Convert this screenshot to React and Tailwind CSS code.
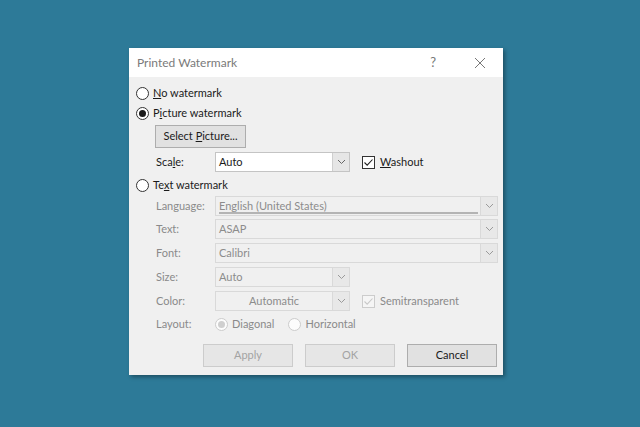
import React from "react";

const FONT = { fontFamily: 'Lato, "Noto Sans", sans-serif' };

function Radio({ checked, disabled }) {
  return (
    <span
      className={
        "flex h-[13px] w-[13px] shrink-0 items-center justify-center rounded-full border " +
        (disabled ? "border-[#cccccc] bg-[#fcfcfc]" : "border-[#333333] bg-white")
      }
    >
      {checked && (
        <span
          className={
            "h-[7px] w-[7px] rounded-full " + (disabled ? "bg-[#cfcfcf]" : "bg-[#1a1a1a]")
          }
        />
      )}
    </span>
  );
}

function Check({ checked, disabled }) {
  return (
    <span
      className={
        "flex h-[13px] w-[13px] shrink-0 items-center justify-center border " +
        (disabled ? "border-[#cccccc] bg-[#f5f5f5]" : "border-[#333333] bg-white")
      }
    >
      {checked && (
        <svg width="11" height="11" viewBox="0 0 11 11">
          <path
            d="M1.5 5.5 L4.2 8.2 L9.5 2.5"
            fill="none"
            stroke={disabled ? "#c8c8c8" : "#222"}
            strokeWidth="1.1"
          />
        </svg>
      )}
    </span>
  );
}

function Chevron({ disabled }) {
  return (
    <svg width="9" height="6" viewBox="0 0 9 6">
      <path
        d="M1 1 L4.5 4.5 L8 1"
        fill="none"
        stroke={disabled ? "#9a9a9a" : "#666"}
        strokeWidth="1"
      />
    </svg>
  );
}

function Select({ value, width, disabled, center, underline }) {
  return (
    <div
      className={
        "flex h-[20px] border " +
        (disabled ? "border-[#d9d9d9] bg-[#f0f0f0]" : "border-[#c4c4c4] bg-white")
      }
      style={{ width }}
    >
      <div
        className={
          "relative flex flex-1 items-center px-[3px] text-[11px] " +
          (center ? "justify-center " : "") +
          (disabled ? "text-[#8c8c8c]" : "text-[#1a1a1a]")
        }
      >
        {value}
        {underline && (
          <span className="absolute bottom-[1px] left-[3px] right-[2px] h-[2px] bg-[#b4b4b4]" />
        )}
      </div>
      <div
        className={
          "flex w-[17px] items-center justify-center border-l " +
          (disabled ? "border-[#d9d9d9] bg-[#e8e8e8]" : "border-[#cfcfcf] bg-[#e6e6e6]")
        }
      >
        <Chevron disabled={disabled} />
      </div>
    </div>
  );
}

function Row({ label, children, className = "" }) {
  return (
    <div className={"flex items-center pl-[27px] " + className}>
      <span className="w-[59px] text-[11px] text-[#8a8a8a]">{label}</span>
      {children}
    </div>
  );
}

function Button({ children, disabled }) {
  return (
    <div
      className={
        "flex h-[23px] w-[90px] items-center justify-center border text-[11px] " +
        (disabled
          ? "border-[#cccccc] bg-[#e6e6e6] text-[#a3a3a3]"
          : "border-[#adadad] bg-[#e1e1e1] text-[#1a1a1a]")
      }
    >
      {children}
    </div>
  );
}

export default function App() {
  return (
    <div className="h-[427px] w-[640px] overflow-hidden bg-[#2d7a98] pl-[129px] pt-[48px]" style={FONT}>
      <div className="flex h-[327px] w-[374px] flex-col bg-[#f0f0f0] shadow-[2px_2px_4px_rgba(0,0,0,0.35)]">
        {/* title bar */}
        <div className="flex h-[29px] items-center bg-white pl-[8px]">
          <span className="text-[12px] text-[#7a7a7a]">Printed Watermark</span>
          <span className="ml-auto mr-[38px] text-[13px] text-[#777]">?</span>
          <svg width="12" height="12" viewBox="0 0 12 12" className="mr-[17px]">
            <path d="M1 1 L11 11 M11 1 L1 11" stroke="#777" strokeWidth="1" />
          </svg>
        </div>

        <div className="flex flex-col pl-[7px]">
          <div className="mt-[6px] flex h-[20px] items-center gap-[4px] text-[11px] text-[#1a1a1a]">
            <Radio />
            <span>
              <span className="underline">N</span>o watermark
            </span>
          </div>
          <div className="flex h-[20px] items-center gap-[4px] text-[11px] text-[#1a1a1a]">
            <Radio checked />
            <span>
              P<span className="underline">i</span>cture watermark
            </span>
          </div>
          <div className="ml-[19px] mt-[2px] flex h-[23px] w-[91px] items-center justify-center border border-[#adadad] bg-[#e1e1e1] text-[11px] text-[#1a1a1a]">
            <span>
              Select <span className="underline">P</span>icture...
            </span>
          </div>

          <div className="mt-[4px] flex items-center pl-[20px]">
            <span className="w-[59px] text-[11px] text-[#1a1a1a]">
              Sca<span className="underline">l</span>e:
            </span>
            <Select value="Auto" width={135} />
            <div className="ml-[12px] flex items-center gap-[5px] text-[11px] text-[#1a1a1a]">
              <Check checked />
              <span>
                <span className="underline">W</span>ashout
              </span>
            </div>
          </div>

          <div className="mt-[3px] flex h-[20px] items-center gap-[4px] text-[11px] text-[#1a1a1a]">
            <Radio />
            <span>
              Te<span className="underline">x</span>t watermark
            </span>
          </div>
        </div>

        <Row label="Language:" className="mt-[1px]">
          <Select value="English (United States)" width={283} disabled underline />
        </Row>
        <Row label="Text:" className="mt-[3px]">
          <Select value="ASAP" width={283} disabled />
        </Row>
        <Row label="Font:" className="mt-[4px]">
          <Select value="Calibri" width={283} disabled />
        </Row>
        <Row label="Size:" className="mt-[4px]">
          <Select value="Auto" width={135} disabled />
        </Row>
        <Row label="Color:" className="mt-[4px]">
          <Select value="Automatic" width={135} disabled center />
          <div className="ml-[12px] flex items-center gap-[5px] text-[11px] text-[#8a8a8a]">
            <Check checked disabled />
            <span>Semitransparent</span>
          </div>
        </Row>
        <Row label="Layout:" className="mt-[3px] h-[20px]">
          <div className="flex items-center gap-[4px] text-[11px] text-[#8a8a8a]">
            <Radio checked disabled />
            <span>Diagonal</span>
          </div>
          <div className="ml-[14px] flex items-center gap-[4px] text-[11px] text-[#8a8a8a]">
            <Radio disabled />
            <span>Horizontal</span>
          </div>
        </Row>

        <div className="mt-[10px] flex justify-end gap-[12px] pr-[6px]">
          <Button disabled>Apply</Button>
          <Button disabled>OK</Button>
          <Button>Cancel</Button>
        </div>
      </div>
    </div>
  );
}
